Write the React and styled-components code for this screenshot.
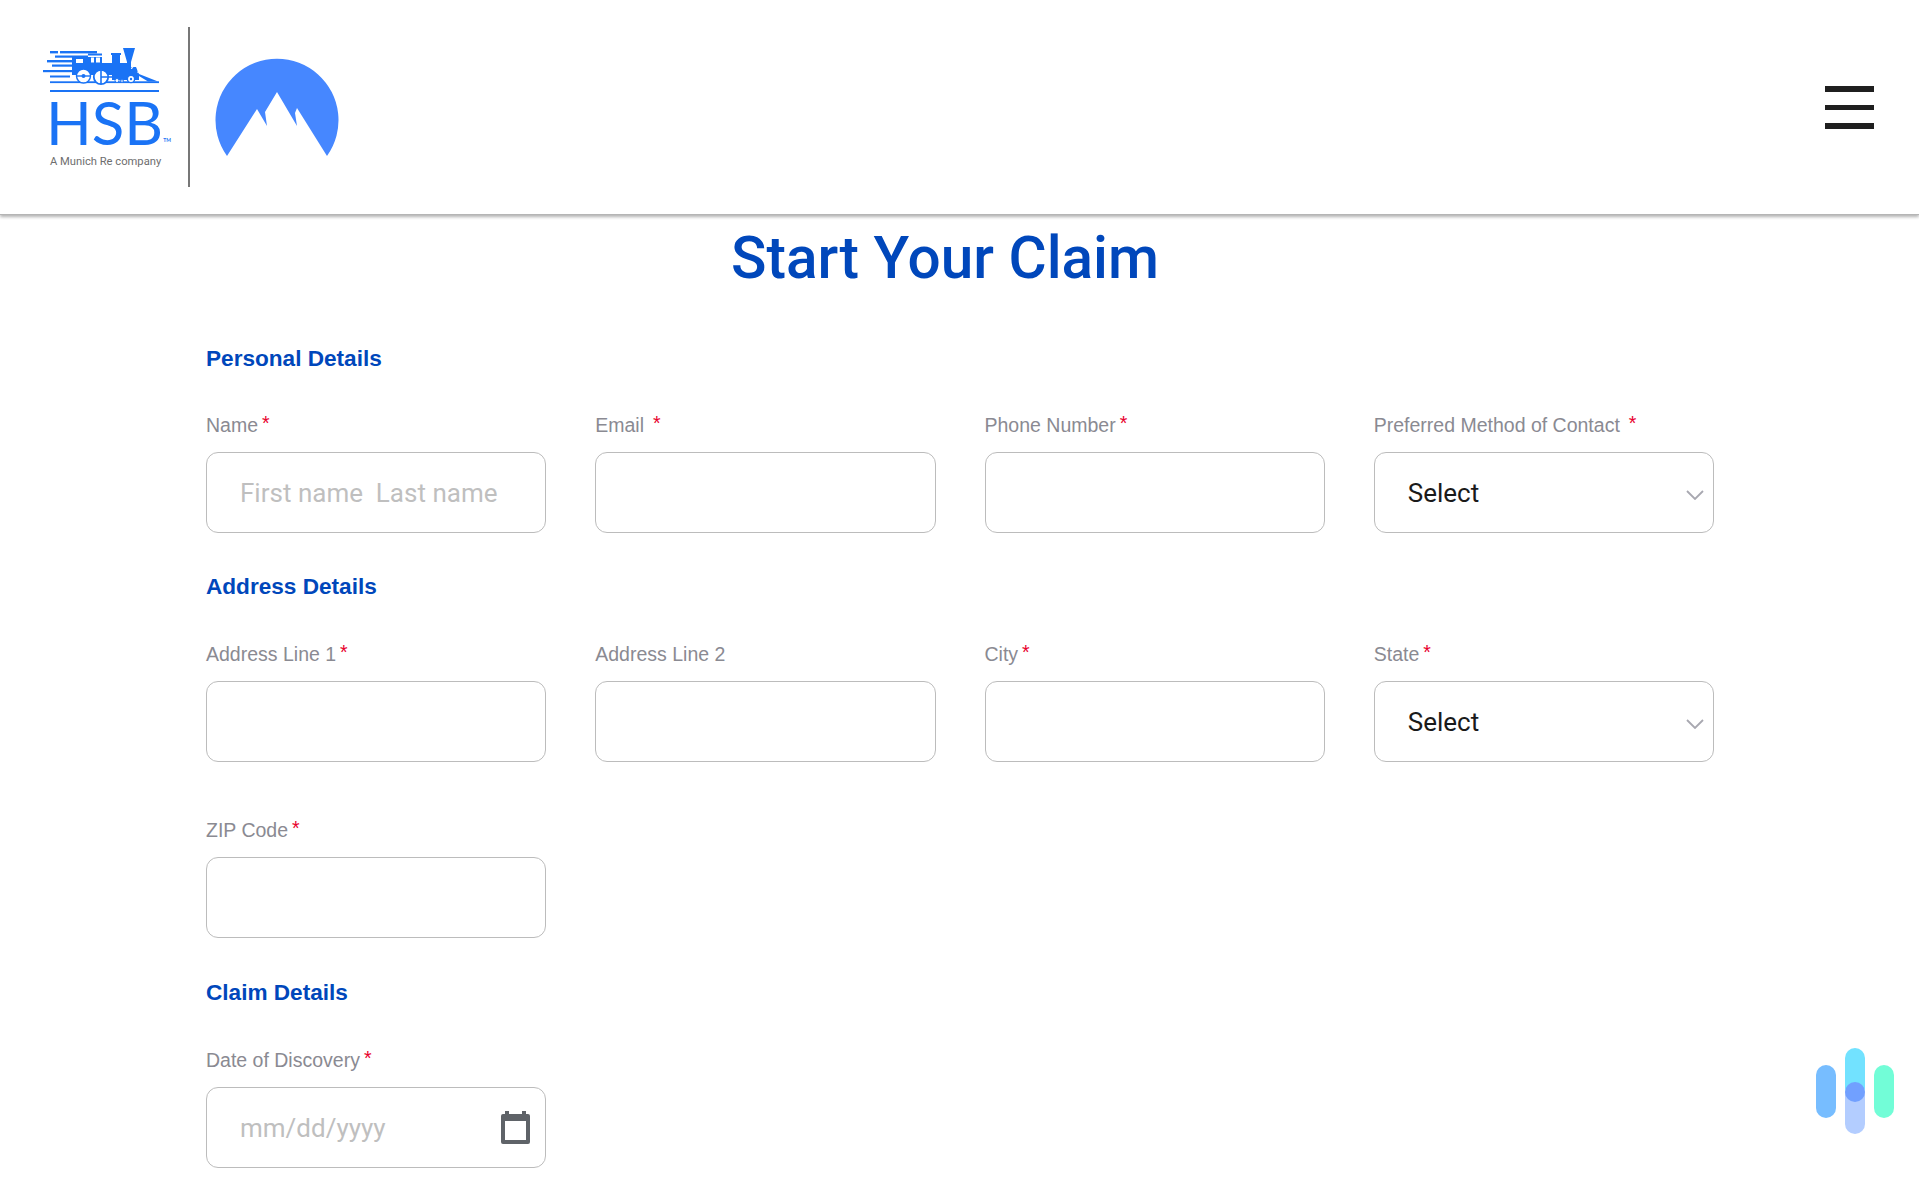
import React from 'react'
import styled, { createGlobalStyle } from 'styled-components'

const GlobalStyle = createGlobalStyle`
html, body {
    margin: 0;
    height: 1199px;
    overflow: hidden;
    background: #fff;
    font-family: "Liberation Sans", Arial, sans-serif;
}
* { box-sizing: border-box; }
`;

const Header = styled.header`
height: 215px;
display: flex;
align-items: flex-start;
justify-content: space-between;
padding: 27px 45px 0 43px;
border-bottom: 1px solid #b5b5b5;
box-shadow: 0 2px 3px rgba(0, 0, 0, 0.3);
`;
const Brand = styled.div`
display: flex;
align-items: flex-start;
`;
const HsbLogo = styled.div`
width: 126px;
display: flex;
flex-direction: column;
margin-top: 20px;
`;
const HsbMark = styled.div`
display: flex;
align-items: flex-end;
margin: 0 0 0 3px;
height: 54px;
color: #1a73f5;
font-family: Lato, sans-serif;
font-size: 60px;
font-weight: 400;
line-height: 54px;
`;
const Tm = styled.span`
font-size: 5px;
line-height: 8px;
font-weight: 700;
margin: 0 0 5px 0;
`;
const Tagline = styled.div`
margin: 6px 0 0 7px;
color: #6e6e6e;
font-family: Roboto, sans-serif;
font-size: 11.2px;
line-height: 14px;
white-space: nowrap;
`;
const Divider = styled.div`
width: 2px;
height: 160px;
background: #777;
margin: 0 25px 0 19px;
`;
const MountainWrap = styled.div`
margin-top: 31px;
`;
const MenuButton = styled.button`
display: flex;
flex-direction: column;
gap: 13px;
width: 49px;
margin-top: 59px;
padding: 0;
border: none;
background: none;
`;
const MenuBar = styled.span`
display: block;
height: 5.5px;
background: #1f1f1f;
`;
const Main = styled.main`
width: 1714px;
padding-left: 206px;
`;
const Title = styled.h1`
margin: 12px 0 0;
padding-right: 30px;
text-align: center;
color: #0047bb;
font-family: Roboto, sans-serif;
font-size: 58.5px;
font-weight: 500;
line-height: 62px;
`;
const SectionTitle = styled.h2`
margin: ${(p) => p.$top}px 0 ${(p) => p.$bottom || 42}px;
color: #0047bb;
font-size: 22.6px;
font-weight: 700;
line-height: 26px;
`;
const Grid = styled.div`
display: grid;
grid-template-columns: repeat(4, 1fr);
column-gap: 49px;
row-gap: 57px;
`;
const Field = styled.div`
display: flex;
flex-direction: column;
`;
const Label = styled.label`
display: flex;
height: 22px;
margin-bottom: 16px;
color: #8a8a92;
font-size: 19.5px;
line-height: 22px;
white-space: nowrap;
`;
const Star = styled.span`
margin-left: ${(p) => p.$gap || 4}px;
color: #e8002d;
font-size: 19.5px;
line-height: 18px;
`;
const Control = styled.div`
position: relative;
height: 81px;
`;
const Input = styled.input`
width: 100%;
height: 100%;
padding: 0 33px;
border: 1px solid #bcbcbc;
border-radius: 12px;
outline: none;
background: #fff;
color: #111;
font-family: Roboto, sans-serif;
font-size: 26px;
&::placeholder {
    color: #bfbfbf;
    opacity: 1;
}
`;
const Select = styled.select`
width: 100%;
height: 100%;
padding: 1px 33px 0;
border: 1px solid #bcbcbc;
border-radius: 12px;
outline: none;
appearance: none;
background: #fff;
color: #1a1a1a;
font-family: Roboto, sans-serif;
font-size: 26px;
`;
const Chevron = styled.svg`
position: absolute;
right: 10px;
top: 38px;
pointer-events: none;
`;
const CalendarIcon = styled.svg`
position: absolute;
right: 16px;
top: 24px;
pointer-events: none;
`;
const ChatWidget = styled.svg`
position: fixed;
left: 1816px;
top: 1048px;
`;

function TrainLogo() {
    return (
        <svg width="126" height="48" viewBox="43 47 126 48" fill="#1a73f5">
            {/* speed lines */}
            <rect x="50" y="51" width="8" height="2.4" />
            <rect x="60" y="51" width="37" height="2.4" />
            <rect x="55" y="55.5" width="33" height="2.2" />
            <rect x="47" y="60" width="32" height="2.4" />
            <rect x="52" y="64.5" width="28" height="2.2" />
            <rect x="43" y="70" width="30" height="2.2" />
            <rect x="50" y="75.5" width="20" height="2" />
            <rect x="50" y="81.3" width="109" height="1.8" />
            {/* cab */}
            <rect x="72" y="57" width="30" height="18" />
            <rect x="76" y="59" width="7" height="4" fill="#fff" />
            <rect x="91" y="57.5" width="3" height="5" fill="#fff" />
            <rect x="96" y="57.5" width="4" height="5" fill="#fff" />
            <rect x="88" y="53.5" width="14" height="2" />
            {/* boiler, dome, stack and cow catcher */}
            <path d="M100 63 H112 V55 H111 V53 H121 V55 H120 V63 H127 V62 L123 48 H135 L131 62 V67 H136 L139 74 L158 81.5 H148 L139 76 V80 H112 V75 H100 Z" />
            {/* front curl */}
            <path d="M131.5 69 a4 4 0 0 1 5.5 -3 q2 2 1 7" fill="none" stroke="#fff" strokeWidth="1.2" />
            {/* wheels */}
            <circle cx="83.5" cy="76" r="7" fill="#fff" stroke="#1a73f5" strokeWidth="1.4" />
            <path d="M76 76 H91" stroke="#1a73f5" strokeWidth="1.4" />
            <circle cx="83.5" cy="76" r="2" />
            <circle cx="101" cy="77" r="7.2" fill="#fff" stroke="#1a73f5" strokeWidth="1.8" />
            <path d="M101 70 V84 M101 77 H113" stroke="#1a73f5" strokeWidth="1.6" />
            <circle cx="117" cy="80.5" r="2" fill="#fff" stroke="#1a73f5" />
            <circle cx="122" cy="81" r="1.4" fill="#fff" stroke="#1a73f5" />
            <circle cx="131" cy="79" r="3.6" fill="#fff" stroke="#1a73f5" strokeWidth="1.4" />
            <circle cx="131" cy="79" r="1.2" />
            {/* rail */}
            <rect x="50" y="90" width="109" height="2" />
        </svg>
    )
}

function MountainLogo() {
    return (
        <svg width="124" height="99" viewBox="215 58 124 99">
            <path
                d="M227 156 A61.5 61.5 0 1 1 327 156 L297 108 L295 113 L297 126 L277 92 L265 112 L267 126 L257 109 Z"
                fill="#4687ff"
            />
        </svg>
    )
}

function RequiredLabel({ text, gap }) {
    return (
        <Label>
            {text}
            {gap !== undefined && <Star $gap={gap}>*</Star>}
        </Label>
    )
}

function TextField({ label, gap, placeholder }) {
    return (
        <Field>
            <RequiredLabel text={label} gap={gap} />
            <Control>
                <Input type="text" placeholder={placeholder} />
            </Control>
        </Field>
    )
}

function SelectField({ label, gap }) {
    return (
        <Field>
            <RequiredLabel text={label} gap={gap} />
            <Control>
                <Select defaultValue="">
                    <option value="">Select</option>
                </Select>
                <Chevron width="18" height="10" viewBox="0 0 18 10">
                    <path d="M1 1 L9 9 L17 1" fill="none" stroke="#a8a8b0" strokeWidth="1.8" />
                </Chevron>
            </Control>
        </Field>
    )
}

export default function App() {
    return (
        <>
            <GlobalStyle />
            <Header>
                <Brand>
                    <HsbLogo>
                        <TrainLogo />
                        <HsbMark>
                            HSB<Tm>TM</Tm>
                        </HsbMark>
                        <Tagline>A Munich Re company</Tagline>
                    </HsbLogo>
                    <Divider />
                    <MountainWrap>
                        <MountainLogo />
                    </MountainWrap>
                </Brand>
                <MenuButton aria-label="Menu">
                    <MenuBar />
                    <MenuBar />
                    <MenuBar />
                </MenuButton>
            </Header>
            <Main>
                <Title>Start Your Claim</Title>

                <SectionTitle $top={57}>Personal Details</SectionTitle>
                <Grid>
                    <TextField label="Name" gap={4} placeholder="First name  Last name" />
                    <TextField label="Email" gap={9} />
                    <TextField label="Phone Number" gap={4} />
                    <SelectField label="Preferred Method of Contact" gap={9} />
                </Grid>

                <SectionTitle $top={41} $bottom={43}>Address Details</SectionTitle>
                <Grid>
                    <TextField label="Address Line 1" gap={4} />
                    <TextField label="Address Line 2" />
                    <TextField label="City" gap={4} />
                    <SelectField label="State" gap={4} />
                    <TextField label="ZIP Code" gap={4} />
                </Grid>

                <SectionTitle $top={42} $bottom={43}>Claim Details</SectionTitle>
                <Grid>
                    <Field>
                        <RequiredLabel text="Date of Discovery" gap={4} />
                        <Control>
                            <Input type="text" placeholder="mm/dd/yyyy" />
                            <CalendarIcon width="29" height="33" viewBox="0 0 29 33">
                                <path
                                    d="M4 0 H8 V3 H21 V0 H25 V3 H27 a2 2 0 0 1 2 2 V31 a2 2 0 0 1 -2 2 H2 a2 2 0 0 1 -2 -2 V5 a2 2 0 0 1 2 -2 H4 Z M4 10 V29 H25 V10 Z"
                                    fill="#5f6368"
                                    fillRule="evenodd"
                                />
                            </CalendarIcon>
                        </Control>
                    </Field>
                </Grid>
            </Main>
            <ChatWidget width="78" height="86" viewBox="0 0 78 86">
                <rect x="0" y="17" width="20" height="53" rx="10" fill="#77bdff" />
                <rect x="58" y="17" width="20" height="53" rx="10" fill="#72fdd7" />
                <rect x="29" y="0" width="20" height="50" rx="10" fill="#72e2ff" />
                <rect x="29" y="36" width="20" height="50" rx="10" fill="#b3cdff" />
                <circle cx="39" cy="44" r="10" fill="#71a0ff" />
            </ChatWidget>
        </>
    )
}
